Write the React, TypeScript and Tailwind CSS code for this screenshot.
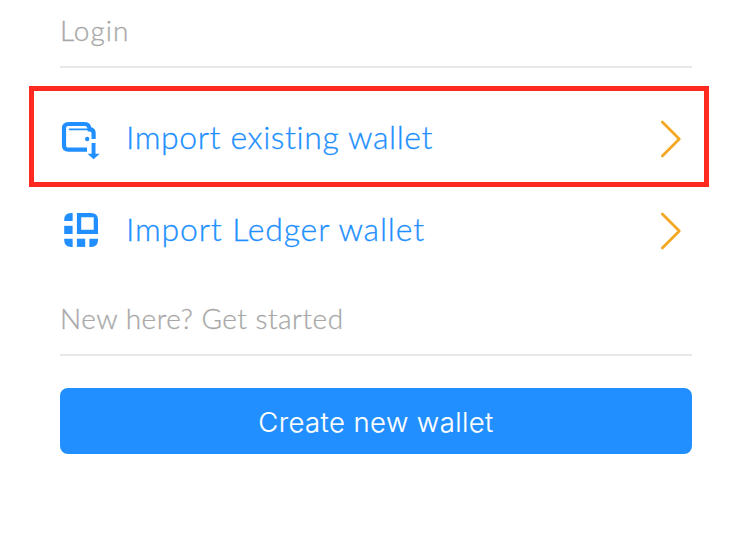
import type { ReactNode } from "react";

function WalletIcon() {
  return (
    <svg width="40" height="40" viewBox="0 0 40 40" fill="none" className="mt-[2px] block shrink-0">
      <path
        d="M27 29.600H8.500Q4 29.600 4 25.200V8.500Q4 4 8.500 4H25Q29 4 29.600 9.300Q33.600 9.300 33.600 13V19"
        stroke="#218fff"
        strokeWidth="4.200"
      />
      <path d="M9.700 9.400H31" stroke="#218fff" strokeWidth="1.900" strokeLinecap="round" />
      <circle cx="27.200" cy="19" r="2.200" fill="#218fff" />
      <path d="M31.600 23H35.500V33.700H39.700L33.600 39.200L27.500 33.700H31.600Z" fill="#218fff" />
    </svg>
  );
}

function LedgerIcon() {
  return (
    <svg width="40" height="40" viewBox="0 0 40 40" fill="#218fff" className="mb-[2px] block shrink-0">
      <path d="M12.600 3V11.100H4.200V10Q4.200 3 11 3Z" />
      <path d="M4.200 15.800H12.600V24H4.200Z" />
      <path d="M4.200 28.700H12.600V36.900H11Q4.200 36.900 4.200 30Z" />
      <path d="M16.900 28.700H25.200V36.900H16.900Z" />
      <path d="M29.400 28.700H38V30Q38 36.900 31 36.900H29.400Z" />
      <path fillRule="evenodd" d="M16.900 3H31Q38 3 38 10V24H16.900ZM21.200 7.200V19.800H33.700V7.200Z" />
    </svg>
  );
}

function Chevron() {
  return (
    <svg width="24" height="40" viewBox="0 0 24 40" fill="none" className="block shrink-0">
      <path
        d="M3.300 3L20.300 20L3.300 37"
        stroke="#f5a623"
        strokeWidth="2.700"
        strokeLinecap="round"
        strokeLinejoin="round"
      />
    </svg>
  );
}

function Heading({ children }: { children: ReactNode }) {
  return (
    <h2 className="flex h-[52px] items-start border-b-2 border-[#e8e8e8] text-[28px] leading-[28px] font-light whitespace-nowrap text-[#a8a8a8] [-webkit-text-stroke:0.3px_#a8a8a8]">
      {children}
    </h2>
  );
}

export default function App() {
  return (
    <main className="h-[542px] w-[736px] overflow-hidden bg-white pt-[16px] font-['Lato','Open_Sans',sans-serif]">
      <div className="mx-[60px] w-[632px]">
        <Heading>
          <span className="tracking-[1px]">Login</span>
        </Heading>
      </div>
      <button className="mt-[18px] ml-[29px] flex h-[101px] w-[680px] items-center border-[5px] border-[#ff2a1f] pt-[5px] pr-[21px] pl-[26px] text-left">
        <WalletIcon />
        <span className="mb-[4px] ml-[26px] flex-1 text-[32px] leading-[40px] font-light tracking-[0.590px] whitespace-nowrap text-[#218fff] [-webkit-text-stroke:0.3px_#218fff]">
          Import existing wallet
        </span>
        <Chevron />
      </button>
      <button className="mt-[24px] ml-[60px] flex h-[40px] w-[623px] items-center text-left">
        <LedgerIcon />
        <span className="mb-[4px] ml-[26px] flex-1 text-[32px] leading-[40px] font-light tracking-[0.840px] whitespace-nowrap text-[#218fff] [-webkit-text-stroke:0.3px_#218fff]">
          Import Ledger wallet
        </span>
        <Chevron />
      </button>
      <div className="mt-[53px] ml-[60px] w-[632px]">
        <Heading>
          <span className="tracking-[0.500px]">New here? Get started</span>
        </Heading>
        <button className="mt-[32px] flex h-[66px] w-full items-center justify-center rounded-lg bg-[#218fff] pt-[3px] font-['Inter',sans-serif] text-[27.500px] font-light tracking-[0.400px] text-white [-webkit-text-stroke:0.15px_white]">
          Create new wallet
        </button>
      </div>
    </main>
  );
}
